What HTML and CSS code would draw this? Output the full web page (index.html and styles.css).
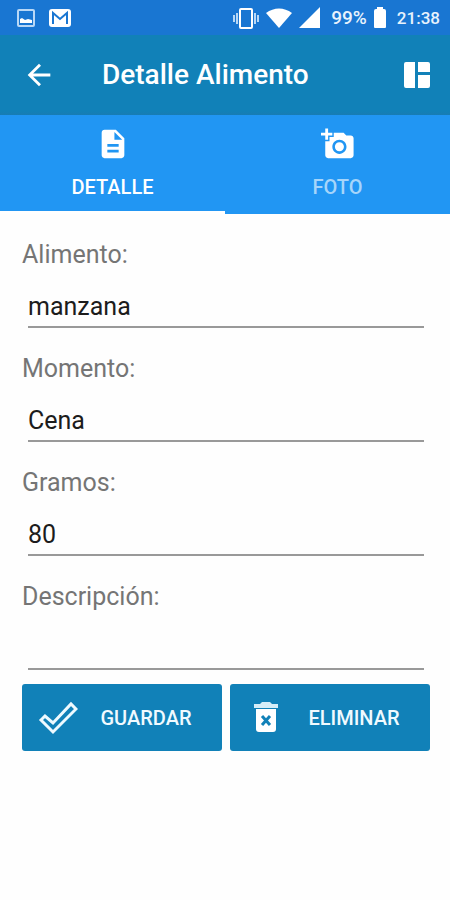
FILE: index.html
```html
<!DOCTYPE html>
<html lang="es">
<head>
<meta charset="utf-8">
<meta name="viewport" content="width=device-width, initial-scale=1">
<title>Detalle Alimento</title>
<link rel="stylesheet" href="styles.css">
</head>
<body>
<div class="status-bar">
  <div class="notifications">
    <svg width="20" height="20" viewBox="0 0 20 20" aria-hidden="true"><rect x="2" y="2" width="16" height="16" rx="1" fill="none" stroke="#b9d8f6" stroke-width="2"/><path d="M4 15V11l2-1 3 2 3-1 4 1v3z" fill="#fff"/></svg>
    <svg width="22" height="20" viewBox="0 0 22 20" aria-hidden="true"><rect y="1" width="22" height="18" rx="3" fill="#fff"/><path d="M4 16V5l7 6 7-6v11" fill="none" stroke="#1976d2" stroke-width="2"/></svg>
  </div>
  <div class="system">
    <svg width="26" height="24" viewBox="0 0 26 24" aria-hidden="true"><rect x="7" y="3" width="12" height="19" rx="1" fill="none" stroke="#fff" stroke-width="2"/><path d="M4 7v11M22 7v11M1 9v7M25 9v7" stroke="#b9d8f6" stroke-width="2"/></svg>
    <svg width="26" height="20" viewBox="0 0 26 20" aria-hidden="true"><path d="M0 5C8-1 18-1 26 5L13 20z" fill="#fff"/></svg>
    <svg width="21" height="21" viewBox="0 0 21 21" aria-hidden="true"><path d="M0 21 21 0v21z" fill="#fff"/></svg>
    <span class="percent">99%</span>
    <svg width="12" height="21" viewBox="0 0 12 21" aria-hidden="true"><path d="M3 0h6v2h1q2 0 2 2v16q0 1-1 1H1q-1 0-1-1V4q0-2 2-2h1z" fill="#fff"/></svg>
    <span class="clock">21:38</span>
  </div>
</div>
<header class="app-bar">
  <button class="icon-button" type="button" aria-label="Volver"><svg width="34" height="34" viewBox="0 0 24 24"><path d="M20 11H7.830l5.590-5.590L12 4l-8 8 8 8 1.410-1.410L7.830 13H20z" fill="#fff"/></svg></button>
  <h1>Detalle Alimento</h1>
  <button class="icon-button" type="button" aria-label="Panel"><svg width="28" height="28" viewBox="0 0 28 28"><path d="M3 1h9v26H3q-2 0-2-2V3q0-2 2-2zM15 1h10q2 0 2 2v8H15zM15 14h12v11q0 2-2 2H15z" fill="#fff"/></svg></button>
</header>
<nav class="tabs" role="tablist">
  <button class="tab active" type="button" role="tab" aria-selected="true">
    <svg width="34" height="34" viewBox="0 0 24 24" aria-hidden="true"><path d="M14 2H6c-1.100 0-2 .9-2 2v16c0 1.100.9 2 2 2h12c1.100 0 2-.9 2-2V8zm2 16H8v-2h8zm0-4H8v-2h8zm-3-5V3.500L18.500 9z" fill="#fff"/></svg>
    <span>DETALLE</span>
  </button>
  <button class="tab" type="button" role="tab" aria-selected="false">
    <svg width="34" height="34" viewBox="0 0 24 24" aria-hidden="true"><path d="M3 4V1h2v3h3v2H5v3H3V6H0V4zm3 6V7h3V4h7l1.830 2H21c1.100 0 2 .9 2 2v12c0 1.100-.9 2-2 2H5c-1.100 0-2-.9-2-2V10zm7 9c2.760 0 5-2.240 5-5s-2.240-5-5-5-5 2.240-5 5 2.240 5 5 5zm-3.200-5c0 1.770 1.430 3.200 3.200 3.200s3.200-1.430 3.200-3.200-1.430-3.200-3.200-3.200-3.200 1.430-3.200 3.200z" fill="#fff"/></svg>
    <span>FOTO</span>
  </button>
</nav>
<main>
  <form>
    <div class="field"><label for="alimento">Alimento:</label><input id="alimento" type="text" value="manzana"></div>
    <div class="field"><label for="momento">Momento:</label><input id="momento" type="text" value="Cena"></div>
    <div class="field"><label for="gramos">Gramos:</label><input id="gramos" type="text" inputmode="numeric" value="80"></div>
    <div class="field"><label for="descripcion">Descripción:</label><input id="descripcion" type="text"></div>
    <div class="actions">
      <button class="action" type="submit">
        <svg width="40" height="40" viewBox="0 0 40 40" aria-hidden="true"><path d="M3 22l4-4 8 7L33 6l5 5-23 23z" fill="none" stroke="#eefaff" stroke-width="3"/></svg>
        <span>GUARDAR</span>
      </button>
      <button class="action" type="button">
        <svg width="40" height="40" viewBox="0 0 40 40" aria-hidden="true"><path d="M8 6h6l2-2h8l2 2h6v4H8z" fill="#d5edf8"/><path d="M10 11h20v20q0 3-3 3H13q-3 0-3-3z" fill="#fff"/><path d="M16 18l8 9M24 18l-8 9" stroke="#1181b8" stroke-width="3"/></svg>
        <span>ELIMINAR</span>
      </button>
    </div>
  </form>
</main>
</body>
</html>
```
FILE: styles.css
```css
* {
  box-sizing: border-box;
}

body {
  margin: 0;
  background: #fefefe;
  color: #1c1c1c;
  font-family: Roboto, "Liberation Sans", sans-serif;
}

svg {
  display: block;
  flex: none;
}

button,
input {
  font: inherit;
}

button {
  border: 0;
  padding: 0;
  background: none;
  color: #fff;
}

.status-bar {
  display: flex;
  align-items: center;
  justify-content: space-between;
  height: 35px;
  padding: 0 10px 0 16px;
  background: #1976d2;
  color: #e8f3fd;
  font-weight: 500;
}

.notifications {
  display: flex;
  gap: 13px;
}

.system {
  display: flex;
  align-items: center;
  gap: 7px;
}

.percent {
  margin-left: 4px;
  font-size: 19px;
}

.clock {
  margin-left: 4px;
  font-size: 17px;
}

.app-bar {
  display: flex;
  align-items: center;
  height: 80px;
  padding: 0 19px 0 22px;
  background: linear-gradient(#1181b8 76px, #187cb4);
}

.app-bar h1 {
  flex: 1;
  margin: 0 0 0 46px;
  color: #fff;
  font-size: 28px;
  font-weight: 500;
  line-height: 36px;
}

.tabs {
  display: grid;
  grid-template-columns: 1fr 1fr;
  height: 99px;
  background: #2196f3;
}

.tab {
  display: flex;
  flex-direction: column;
  align-items: center;
  gap: 14px;
  padding-top: 12px;
  border-bottom: 3px solid transparent;
  color: #a6d5fa;
  font-size: 20px;
  font-weight: 500;
  line-height: 24px;
}

.tab.active {
  border-bottom-color: #fff;
  color: #fff;
}

main {
  padding: 26px 20px 24px 22px;
}

.field {
  display: flex;
  flex-direction: column;
  margin-bottom: 26px;
}

.field label {
  color: #757575;
  font-size: 25px;
  line-height: 30px;
}

.field input {
  height: 58px;
  margin: 0 6px;
  padding: 16px 0 0;
  border: 0;
  border-bottom: 2px solid #999;
  border-radius: 0;
  outline: 0;
  background: none;
  color: #1c1c1c;
  font-size: 25px;
}

.actions {
  display: grid;
  grid-template-columns: 1fr 1fr;
  gap: 8px;
  margin-top: -12px;
}

.action {
  display: flex;
  align-items: center;
  height: 67px;
  padding: 0 16px;
  border-radius: 3px;
  background: #1181b8;
  color: #f0faff;
  font-size: 20px;
  font-weight: 500;
}

.action span {
  flex: 1;
  padding-left: 8px;
  text-align: center;
}
```
